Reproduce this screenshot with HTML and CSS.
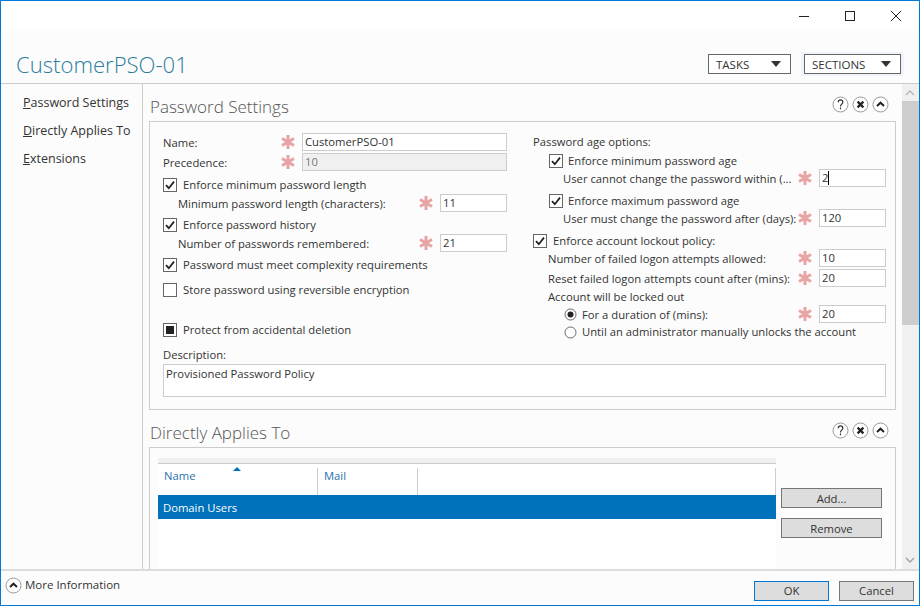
FILE: index.html
```html
<!DOCTYPE html>
<html lang="en">
<head>
  <meta charset="UTF-8" />
  <meta name="viewport" content="width=device-width, initial-scale=1.0" />
  <title>CustomerPSO-01</title>
  <link rel="stylesheet" href="styles.css">
</head>
<body>
  <svg class="defs" width="0" height="0">
    <symbol id="star" viewBox="0 0 14 14">
      <path d="M7 0v14M1 3.5l12 7M13 3.5l-12 7" fill="none" stroke="#e8a3a3" stroke-width="3"/>
    </symbol>
    <symbol id="check" viewBox="0 0 14 14">
      <rect x="0.5" y="0.5" width="13" height="13" fill="#fff" stroke="#666"/>
      <path d="M3 7.2l2.8 3L11 3.6" fill="none" stroke="#222" stroke-width="1.8"/>
    </symbol>
    <symbol id="uncheck" viewBox="0 0 14 14">
      <rect x="0.5" y="0.5" width="13" height="13" fill="#fff" stroke="#666"/>
    </symbol>
    <symbol id="mixed" viewBox="0 0 14 14">
      <rect x="0.5" y="0.5" width="13" height="13" fill="#fff" stroke="#666"/>
      <rect x="3" y="3" width="8" height="8" fill="#222"/>
    </symbol>
    <symbol id="radio-on" viewBox="0 0 13 13">
      <circle cx="6.5" cy="6.5" r="5.5" fill="#fff" stroke="#666"/>
      <circle cx="6.5" cy="6.5" r="3" fill="#222"/>
    </symbol>
    <symbol id="radio-off" viewBox="0 0 13 13">
      <circle cx="6.5" cy="6.5" r="5.5" fill="#fff" stroke="#666"/>
    </symbol>
    <symbol id="round-help" viewBox="0 0 17 17">
      <circle cx="8.5" cy="8.5" r="7.5" fill="#fff" stroke="#999"/>
      <path d="M6.2 6.2c.2-3 4.6-3 4.6 0 0 1.9-2.3 2-2.3 4.2M8.5 11.6v1.6" fill="none" stroke="#333" stroke-width="1.2"/>
    </symbol>
    <symbol id="round-close" viewBox="0 0 17 17">
      <circle cx="8.5" cy="8.5" r="7.5" fill="#fff" stroke="#999"/>
      <path d="M5.6 5.6l5.8 5.8M11.4 5.6l-5.8 5.8" fill="none" stroke="#222" stroke-width="2.2"/>
    </symbol>
    <symbol id="round-up" viewBox="0 0 17 17">
      <circle cx="8.5" cy="8.5" r="7.5" fill="#fff" stroke="#999"/>
      <path d="M5 10l3.5-3.3L12 10" fill="none" stroke="#222" stroke-width="2"/>
    </symbol>
  </svg>

  <div class="window">
    <div class="titlebar">
      <svg class="win-btn" width="12" height="12" viewBox="0 0 12 12"><path d="M1 6.5h10" stroke="#222"/></svg>
      <svg class="win-btn" width="12" height="12" viewBox="0 0 12 12"><rect x="1.5" y="1.5" width="9" height="9" fill="none" stroke="#222"/></svg>
      <svg class="win-btn" width="12" height="12" viewBox="0 0 12 12"><path d="M1 1l10 10M11 1L1 11" stroke="#222"/></svg>
    </div>

    <div class="header">
      <h1>CustomerPSO-01</h1>
      <div class="dropdown tasks">TASKS<span class="arrow"></span></div>
      <div class="dropdown-glow"><div class="dropdown sections">SECTIONS<span class="arrow"></span></div></div>
    </div>

    <div class="body">
      <nav class="nav">
        <a><u>P</u>assword Settings</a>
        <a><u>D</u>irectly Applies To</a>
        <a><u>E</u>xtensions</a>
      </nav>

      <div class="main">
        <section class="section">
          <div class="section-head">
            <h2>Password Settings</h2>
            <div class="section-icons">
              <svg width="17" height="17"><use href="#round-help"/></svg>
              <svg width="17" height="17"><use href="#round-close"/></svg>
              <svg width="17" height="17"><use href="#round-up"/></svg>
            </div>
          </div>
          <div class="box">
            <div class="columns">
              <div class="col-left">
                <div class="row"><span class="label">Name:</span><svg class="star" width="14" height="14"><use href="#star"/></svg><div class="field wide">CustomerPSO-01</div></div>
                <div class="row"><span class="label">Precedence:</span><svg class="star" width="14" height="14"><use href="#star"/></svg><div class="field wide disabled">10</div></div>
                <div class="row opt"><svg class="box-icon" width="14" height="14"><use href="#check"/></svg><span>Enforce minimum password length</span></div>
                <div class="row indent"><span class="label">Minimum password length (characters):</span><svg class="star" width="14" height="14"><use href="#star"/></svg><div class="field small">11</div></div>
                <div class="row opt"><svg class="box-icon" width="14" height="14"><use href="#check"/></svg><span>Enforce password history</span></div>
                <div class="row indent"><span class="label">Number of passwords remembered:</span><svg class="star" width="14" height="14"><use href="#star"/></svg><div class="field small">21</div></div>
                <div class="row opt"><svg class="box-icon" width="14" height="14"><use href="#check"/></svg><span>Password must meet complexity requirements</span></div>
                <div class="row opt"><svg class="box-icon" width="14" height="14"><use href="#uncheck"/></svg><span>Store password using reversible encryption</span></div>
                <div class="row opt"><svg class="box-icon" width="14" height="14"><use href="#mixed"/></svg><span>Protect from accidental deletion</span></div>
              </div>

              <div class="col-right">
                <div class="row opt"><span>Password age options:</span></div>
                <div class="row opt in-1"><svg class="box-icon" width="14" height="14"><use href="#check"/></svg><span>Enforce minimum password age</span></div>
                <div class="row in-2"><span class="label">User cannot change the password within (...</span><svg class="star" width="14" height="14"><use href="#star"/></svg><div class="field small">2<span class="caret"></span></div></div>
                <div class="row opt in-1"><svg class="box-icon" width="14" height="14"><use href="#check"/></svg><span>Enforce maximum password age</span></div>
                <div class="row in-2"><span class="label">User must change the password after (days):</span><svg class="star" width="14" height="14"><use href="#star"/></svg><div class="field small">120</div></div>
                <div class="row opt"><svg class="box-icon" width="14" height="14"><use href="#check"/></svg><span>Enforce account lockout policy:</span></div>
                <div class="row in-3"><span class="label">Number of failed logon attempts allowed:</span><svg class="star" width="14" height="14"><use href="#star"/></svg><div class="field small">10</div></div>
                <div class="row in-3"><span class="label">Reset failed logon attempts count after (mins):</span><svg class="star" width="14" height="14"><use href="#star"/></svg><div class="field small">20</div></div>
                <div class="row opt in-3"><span>Account will be locked out</span></div>
                <div class="row in-4"><svg class="radio" width="13" height="13"><use href="#radio-on"/></svg><span class="label">For a duration of (mins):</span><svg class="star" width="14" height="14"><use href="#star"/></svg><div class="field small">20</div></div>
                <div class="row opt in-4"><svg class="radio" width="13" height="13"><use href="#radio-off"/></svg><span>Until an administrator manually unlocks the account</span></div>
              </div>
            </div>
            <div class="desc-label">Description:</div>
            <div class="desc">Provisioned Password Policy</div>
          </div>
        </section>

        <section class="section">
          <div class="section-head">
            <h2>Directly Applies To</h2>
            <div class="section-icons">
              <svg width="17" height="17"><use href="#round-help"/></svg>
              <svg width="17" height="17"><use href="#round-close"/></svg>
              <svg width="17" height="17"><use href="#round-up"/></svg>
            </div>
          </div>
          <div class="box box-list">
            <div class="list">
              <div class="list-head">
                <div class="col-name">Name<span class="sort"></span></div>
                <div class="col-mail">Mail</div>
                <div class="col-rest"></div>
              </div>
              <div class="list-row">Domain Users</div>
            </div>
            <div class="list-buttons">
              <div class="btn">Add...</div>
              <div class="btn">Remove</div>
            </div>
          </div>
        </section>
      </div>

      <div class="scrollbar">
        <svg width="16" height="17" viewBox="0 0 16 17"><path d="M4 11l4-4 4 4" fill="none" stroke="#b5b5b5" stroke-width="1.3"/></svg>
        <div class="thumb"></div>
        <div class="track"></div>
        <svg width="16" height="17" viewBox="0 0 16 17"><path d="M4 6l4 4 4-4" fill="none" stroke="#a0a0a0" stroke-width="1.3"/></svg>
      </div>
    </div>

    <div class="footer">
      <svg class="more-icon" width="17" height="17"><use href="#round-up"/></svg>
      <span class="more">More Information</span>
      <div class="btn btn-ok">OK</div>
      <div class="btn btn-cancel">Cancel</div>
    </div>
  </div>
</body>
</html>
```

FILE: styles.css
```css
:root {
  --blue: #0078d7;
  --line: #cccccc;
  --panel: #fcfcfc;
  --text: #333333;
}

* {
  box-sizing: border-box;
}

html, body {
  margin: 0;
  padding: 0;
  height: 100%;
  overflow: hidden;
}

body {
  font-family: 'Open Sans', sans-serif;
  font-size: 11.25px;
  color: var(--text);
  background-color: var(--panel);
}

.defs {
  display: block;
  height: 0;
}

.window {
  display: flex;
  flex-direction: column;
  width: 920px;
  height: 606px;
  border: 1px solid var(--blue);
}

.titlebar {
  display: flex;
  justify-content: flex-end;
  align-items: center;
  gap: 34px;
  flex: none;
  height: 30px;
  padding-right: 17px;
  background-color: #fff;
}

.header {
  display: flex;
  align-items: flex-start;
  flex: none;
  height: 53px;
  padding: 23px 15px 0 15px;
  background-color: var(--panel);
  border-bottom: 1px solid var(--line);
}

h1 {
  margin: -5px auto 0 0;
  font-size: 22.1px;
  font-weight: 300;
  line-height: 30px;
  color: #2b7c9e;
}

.dropdown {
  display: flex;
  justify-content: space-between;
  align-items: center;
  height: 20px;
  padding: 0 9px 0 7px;
  background-color: #fff;
  border: 1px solid #666;
  font-size: 11.5px;
}

.tasks {
  width: 83px;
}

.sections {
  width: 97px;
}

.dropdown-glow {
  margin: -2px 0 0 10px;
  padding: 2px 3px;
  background-color: #eef3fc;
}

.arrow {
  width: 0;
  height: 0;
  border-left: 5px solid transparent;
  border-right: 5px solid transparent;
  border-top: 6px solid #333;
}

.body {
  display: flex;
  flex: 1;
  min-height: 0;
}

.nav {
  display: flex;
  flex-direction: column;
  flex: none;
  width: 142px;
  padding: 9px 0 0 22px;
  border-right: 1px solid var(--line);
  font-size: 12.5px;
}

.nav a {
  height: 28px;
  line-height: 20px;
}

.main {
  flex: 1;
  min-width: 0;
  padding: 0 6px;
  overflow: hidden;
}

.section-head {
  position: relative;
  height: 37px;
}

h2 {
  margin: 0;
  padding: 11px 0 0 1px;
  font-size: 17px;
  font-weight: 300;
  line-height: 24px;
  color: #555;
}

.section-icons {
  position: absolute;
  top: 12px;
  right: 7px;
  display: flex;
  gap: 3px;
}

.box {
  height: 289px;
  padding: 11px 9px 0 13px;
  border: 1px solid var(--line);
}

.columns {
  display: flex;
  height: 214px;
}

.col-left,
.col-right {
  display: grid;
  align-content: start;
}

.col-left {
  flex: none;
  width: 344px;
  margin-right: 26px;
  grid-template-rows: 20px 23px 18px 22px 18px 22px 25px 40px 18px;
}

.col-right {
  flex: 1;
  min-width: 0;
  grid-template-rows: 19px 17px 23px 17px 23px 17px 20px 19px 17px 18px 18px;
}

.row {
  display: flex;
  align-items: center;
  height: 18px;
  white-space: nowrap;
}

/* checkbox and plain text rows sit a pixel higher than the field rows */
.opt > span {
  margin-top: -2px;
}

.label {
  flex: 1;
  min-width: 0;
}

.indent {
  padding-left: 15px;
}

.in-1 {
  padding-left: 16px;
}

.in-1 .box-icon {
  margin-right: 5px;
}

.in-2 {
  padding-left: 30px;
}

.in-3 {
  padding-left: 15px;
}

.in-4 {
  padding-left: 31px;
}

.star {
  flex: none;
  margin-right: 7px;
}

.box-icon {
  flex: none;
  margin-right: 6px;
}

.radio {
  flex: none;
  margin-right: 5px;
}

.field {
  flex: none;
  height: 18px;
  padding-left: 2px;
  line-height: 16px;
  background-color: #fff;
  border: 1px solid var(--line);
}

.wide {
  width: 205px;
}

.small {
  width: 67px;
}

.disabled {
  background-color: #f0f0f0;
  color: #777;
}

.caret {
  display: inline-block;
  width: 1px;
  height: 14px;
  background-color: #000;
  vertical-align: -3px;
}

.desc-label {
  height: 17px;
  line-height: 15px;
}

.desc {
  height: 33px;
  padding: 1px 2px;
  background-color: #fff;
  border: 1px solid var(--line);
}

.box-list {
  display: flex;
  height: 200px;
  padding: 10px 0 0 8px;
}

.list {
  flex: none;
  width: 618px;
  background-color: #fff;
  border-top: 5px solid #f0f0f0;
}

.list-head {
  display: flex;
  height: 32px;
  padding-top: 4px;
  border-top: 1px solid var(--line);
  color: #1f72b0;
}

.col-name {
  position: relative;
  width: 160px;
  padding-left: 6px;
  line-height: 16px;
  border-right: 1px solid var(--line);
}

.col-mail {
  width: 100px;
  padding-left: 6px;
  line-height: 16px;
  border-right: 1px solid var(--line);
}

.col-rest {
  flex: 1;
  border-right: 1px solid var(--line);
}

.sort {
  position: absolute;
  top: -1px;
  left: 75px;
  width: 0;
  height: 0;
  border-left: 4px solid transparent;
  border-right: 4px solid transparent;
  border-bottom: 4px solid #0072bc;
}

.list-row {
  height: 24px;
  padding: 1px 0 0 5px;
  line-height: 24px;
  color: #fff;
  background-color: #0072bc;
}

.list-buttons {
  display: flex;
  flex-direction: column;
  gap: 10px;
  margin: 30px 0 0 5px;
}

.btn {
  width: 101px;
  height: 20px;
  line-height: 20px;
  text-align: center;
  background-color: #dddddd;
  border: 1px solid #777;
}

.scrollbar {
  display: flex;
  flex-direction: column;
  flex: none;
  width: 17px;
  background-color: #f0f0f0;
}

.thumb {
  flex: none;
  height: 224px;
  background-color: #cdcdcd;
}

.track {
  flex: 1;
}

.footer {
  display: flex;
  align-items: flex-start;
  flex: none;
  height: 36px;
  padding: 6px 5px 0 4px;
  border-top: 2px solid #dddddd;
  background-color: var(--panel);
}

.more-icon {
  margin-right: 3px;
}

.more {
  margin-right: auto;
  font-size: 11.5px;
  line-height: 16px;
}

.footer .btn {
  line-height: 18px;
}

.btn-ok {
  width: 75px;
  margin: 4px 10px 0 0;
  border-color: var(--blue);
}

.btn-cancel {
  width: 75px;
  margin-top: 4px;
}
```
